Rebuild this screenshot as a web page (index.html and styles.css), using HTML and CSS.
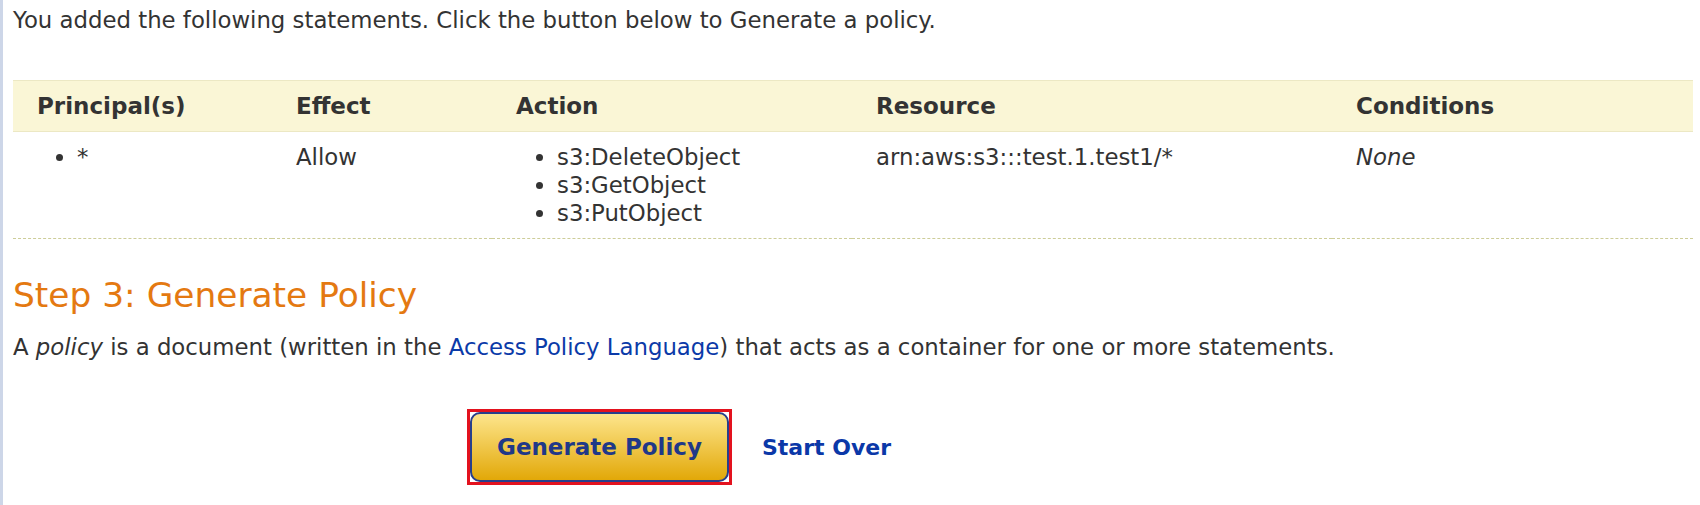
FILE: index.html
```html
<!DOCTYPE html>
<html>
<head>
<meta charset="utf-8">
<title>Policy Generator</title>
<link rel="stylesheet" href="styles.css">
</head>
<body>
<div class="page">
  <p class="intro">You added the following statements. Click the button below to Generate a policy.</p>
  <table class="statements">
    <colgroup>
      <col class="c1"><col class="c2"><col class="c3"><col class="c4"><col class="c5">
    </colgroup>
    <thead>
      <tr><th>Principal(s)</th><th>Effect</th><th>Action</th><th>Resource</th><th>Conditions</th></tr>
    </thead>
    <tbody>
      <tr>
        <td><ul class="bullets principal"><li>*</li></ul></td>
        <td>Allow</td>
        <td><ul class="bullets action"><li>s3:DeleteObject</li><li>s3:GetObject</li><li>s3:PutObject</li></ul></td>
        <td>arn:aws:s3:::test.1.test1/*</td>
        <td><em>None</em></td>
      </tr>
    </tbody>
  </table>
  <h2 class="step">Step 3: Generate Policy</h2>
  <p class="desc">A <em>policy</em> is a document (written in the <a class="link" href="#">Access Policy Language</a>) that acts as a container for one or more statements.</p>
  <div class="actions">
    <div class="highlight"><button class="generate" type="button">Generate Policy</button></div>
    <a class="start-over" href="#">Start Over</a>
  </div>
</div>
</body>
</html>
```
FILE: styles.css
```css
html, body {
  margin: 0;
  background: #ffffff;
}
body {
  font-family: "DejaVu Sans", "Liberation Sans", sans-serif;
  font-size: 22.8px;
  color: #333333;
}
.page {
  border-left: 3px solid #cdd6e8;
  padding: 6px 7px 0 10px;
  min-height: 505px;
  box-sizing: border-box;
}
.intro {
  margin: 0;
  line-height: 28px;
}
.statements {
  margin-top: 46px;
  width: 1680px;
  border-collapse: collapse;
  table-layout: fixed;
}
.c1 { width: 259px; }
.c2 { width: 220px; }
.c3 { width: 360px; }
.c4 { width: 480px; }
.c5 { width: 361px; }
.statements th {
  background: #faf6d6;
  border-top: 1px solid #ece8c4;
  border-bottom: 1px solid #ece8c4;
  text-align: left;
  font-weight: bold;
  font-size: 23px;
  line-height: 28px;
  padding: 11px 0 11px 24px;
  color: #333333;
}
.statements td {
  vertical-align: top;
  line-height: 28px;
  padding: 11px 0 11px 24px;
  border-bottom: 1px dashed #cdcd99;
}
.bullets {
  margin: 0;
  list-style: disc;
}
.principal {
  padding-left: 40px;
}
.action {
  padding-left: 41px;
}
.step {
  margin: 36px 0 0 0;
  font-size: 34.4px;
  line-height: 40px;
  font-weight: normal;
  color: #e47911;
}
.desc {
  margin: 18px 0 0 0;
  line-height: 28px;
}
.link {
  color: #0b3aa8;
  text-decoration: none;
}
.actions {
  margin: 48px 0 0 454px;
  display: flex;
  align-items: center;
}
.highlight {
  border: 3px solid #e3121e;
  display: flex;
}
.generate {
  width: 259px;
  height: 70px;
  border: 2px solid #283f8c;
  border-radius: 10px;
  background: linear-gradient(#fde58c, #e2a808);
  font-family: "DejaVu Sans", "Liberation Sans", sans-serif;
  font-weight: bold;
  font-size: 23px;
  color: #203888;
  padding: 0;
}
.start-over {
  margin-left: 30px;
  font-weight: bold;
  font-size: 22px;
  color: #0b38a8;
  text-decoration: none;
}
```
